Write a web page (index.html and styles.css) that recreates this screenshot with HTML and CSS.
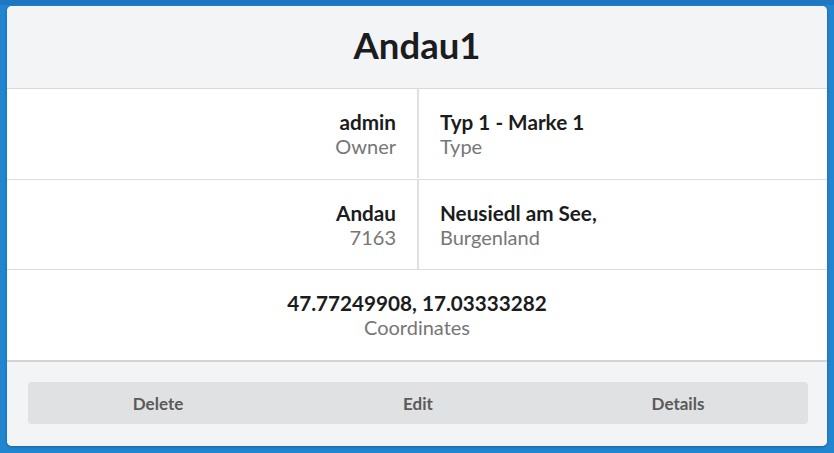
FILE: index.html
```html
<!DOCTYPE html>
<html>
<head>
<meta charset="utf-8">
<link rel="stylesheet" href="styles.css">
</head>
<body>
<div class="card">
  <div class="card-header">Andau1</div>
  <div class="row split first">
    <div class="cell left"><div class="value">admin</div><div class="label">Owner</div></div>
    <div class="cell right"><div class="value">Typ 1 - Marke 1</div><div class="label">Type</div></div>
  </div>
  <div class="row split">
    <div class="cell left"><div class="value">Andau</div><div class="label">7163</div></div>
    <div class="cell right"><div class="value">Neusiedl am See,</div><div class="label">Burgenland</div></div>
  </div>
  <div class="row full">
    <div class="cell center"><div class="value">47.77249908, 17.03333282</div><div class="label">Coordinates</div></div>
  </div>
  <div class="card-footer">
    <div class="buttons">
      <button class="btn">Delete</button>
      <button class="btn">Edit</button>
      <button class="btn">Details</button>
    </div>
  </div>
</div>
</body>
</html>
```
FILE: styles.css
```css
html, body { margin: 0; padding: 0; }
body {
  background: linear-gradient(#1f76c2 0, #1f76c2 5px, #2185d0 5px);
  height: 453px;
  padding: 6px 7px 0 7px;
  box-sizing: border-box;
  font-family: Lato, "Noto Sans", sans-serif;
  color: #1b1c1d;
}
.card {
  width: 820px;
  height: 440px;
  background: #fff;
  border-radius: 5px;
  overflow: hidden;
  display: flex;
  flex-direction: column;
  box-shadow: 0 1px 3px rgba(0,0,0,0.25);
}
.card-header {
  height: 83px;
  flex: 0 0 83px;
  background: #f3f4f5;
  border-bottom: 1px solid #d9d9da;
  display: flex;
  align-items: center;
  justify-content: center;
  font-size: 36.5px;
  font-weight: 700;
  padding-bottom: 4px;
  box-sizing: border-box;
}
.row {
  flex: 0 0 90px;
  border-bottom: 1px solid #dcdcdd;
  box-sizing: border-box;
  display: flex;
}
.row.first { flex-basis: 91px; padding-bottom: 1px; }
.row.full { flex-basis: 92px; border-bottom: 2px solid #d4d4d5; }
.cell {
  flex: 1;
  display: flex;
  flex-direction: column;
  justify-content: center;
  padding: 0 21px;
}
.cell.left { align-items: flex-end; border-right: 2px solid #e0e0e1; flex: 0 0 412px; box-sizing: border-box; }
.cell.right { align-items: flex-start; }
.cell.center { align-items: center; }
.value { font-size: 20.7px; font-weight: 700; line-height: 24px; }
.label { font-size: 20px; color: #767676; line-height: 24px; }
.card-footer {
  flex: 1;
  background: #f3f4f5;
  padding: 20px 19px 0 21px;
}
.buttons {
  display: flex;
  background: #e0e1e2;
  border-radius: 4px;
  height: 42px;
}
.btn {
  flex: 1;
  border: none;
  background: transparent;
  font-family: Lato, "Noto Sans", sans-serif;
  font-size: 17px;
  font-weight: 700;
  color: #5a5a5a;
  padding: 0;
}
```
